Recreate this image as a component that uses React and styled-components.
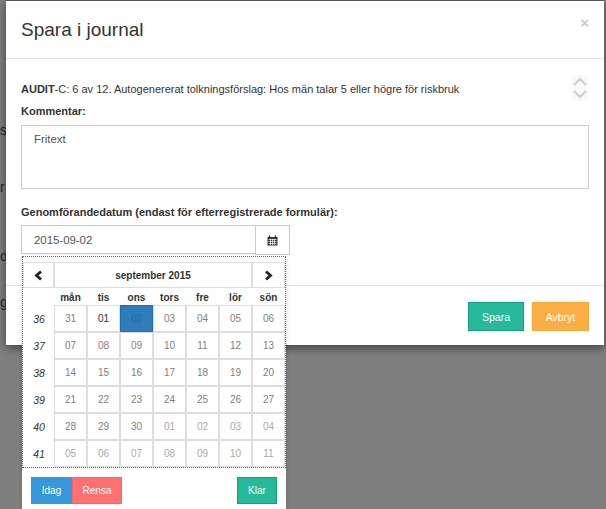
import React from "react";
import styled, { createGlobalStyle } from "styled-components";

const Global = createGlobalStyle`
  html, body { margin: 0; padding: 0; height: 100%; }
  body { background: #7f7f7f; font-family: "Liberation Sans", Arial, sans-serif; color: #333; overflow: hidden; }
`;
const Page = styled.div`
  position: relative; width: 606px; height: 509px; overflow: hidden; background: #7f7f7f;
  padding: 0 2px 0 6px; box-sizing: border-box;
`;
const Behind = styled.span`
  position: absolute; left: 0; top: ${p => p.$y}px; font-size: 14px; line-height: 16px; color: #262626;
`;
const Modal = styled.div`
  position: relative; background: #fff; height: 345px; display: flex; flex-direction: column;
  box-shadow: 0 3px 9px rgba(0,0,0,.5);
  border-top: 1px solid #555; box-sizing: border-box;
`;
const Header = styled.header`
  height: 58px; flex: none; box-sizing: border-box; border-bottom: 1px solid #e5e5e5; padding: 0 15px;
  display: flex; align-items: center; justify-content: space-between;
`;
const Title = styled.h4`
  margin: 1px 0 0; font-size: 19px; font-weight: 400; color: #333; line-height: 20px;
`;
const Close = styled.span`
  font-size: 15px; font-weight: 700; color: #c8c8c8; margin: 0 0 14px; line-height: 16px;
`;
const Body = styled.div`
  flex: 1; padding: 15px; display: flex; flex-direction: column;
`;
const InfoRow = styled.div`
  display: flex; justify-content: space-between; align-items: center; height: 32px; margin-top: -2px;
`;
const Info = styled.p`
  margin: 2px 0 0; font-size: 11px; line-height: 16px; color: #333;
  b { font-weight: 700; }
`;
const Scroller = styled.svg`
  width: 18px; height: 28px; background: #fafafa; flex: none;
`;
const Label = styled.label`
  display: block; font-size: 11px; font-weight: 700; line-height: 14px; color: #333;
`;
const Comment = styled.div`
  margin-top: 7px; height: 64px; border: 1px solid #ccc; box-sizing: border-box; padding: 6px 12px;
  font-size: 11.4px; line-height: 14px; color: #555;
`;
const DateLabel = styled(Label)`
  margin-top: 16px;
`;
const DateGroup = styled.div`
  display: flex; width: 269px; margin-top: 6px; height: 30px;
`;
const DateInput = styled.div`
  width: 234px; height: 29px; box-sizing: border-box; border: 1px solid #ccc; border-right: 0; padding: 0 12px;
  display: flex; align-items: center; font-size: 11.4px; color: #555;
`;
const CalButton = styled.div`
  flex: 1; border: 1px solid #ccc; display: flex; align-items: center; justify-content: center; box-sizing: border-box;
`;
const Footer = styled.footer`
  height: 60px; flex: none; box-sizing: border-box; border-top: 1px solid #e5e5e5;
  display: flex; justify-content: flex-end; gap: 8px; padding: 16px 15px 0 0;
`;
const Btn = styled.button`
  background: ${p => p.$bg}; border: 1px solid ${p => p.$line}; color: #fff; font: 400 10.5px "Liberation Sans", Arial, sans-serif;
  width: ${p => p.$w}px; height: 29px; padding: 0; border-radius: 0;
`;
const Picker = styled.div`
  position: absolute; left: 22px; top: 255px; width: 264px; height: 254px; background: #fff;
  box-shadow: 0 1px 4px rgba(0,0,0,.2); box-sizing: border-box; padding-top: 1px;
`;
const CalGrid = styled.div`
  border: 1px dotted #666; height: 212px; box-sizing: border-box; padding-top: 5px;
  display: grid; grid-template-columns: 31px repeat(7, 33px); grid-template-rows: 26px 17px repeat(6, 27px);
  font-size: 10px;
`;
const Nav = styled.div`
  display: flex; align-items: center; justify-content: center; background: #fff; border: 1px solid #ddd; box-sizing: border-box;
  ${p => p.$wide && "grid-column: span 6; font-weight: 700; color: #333;"}
`;
const Head = styled.div`
  display: flex; align-items: center; justify-content: center; font-weight: 700; color: #333; font-size: 10px; padding-top: 1px;
`;
const Week = styled.div`
  display: flex; align-items: center; justify-content: center; font-style: italic; color: #333; font-size: 10.5px; padding-left: 1px;
`;
const Cell = styled.div`
  display: flex; align-items: center; justify-content: center; box-sizing: border-box;
  border: 1px solid #ddd; font-size: 10px;
  color: ${p => p.$tone};
  background: ${p => (p.$sel ? "#2e7db8" : "#fff")};
  ${p => p.$sel && "border-color: #1f6fa8;"}
`;
const Actions = styled.div`
  display: flex; padding: 9px 9px 0 9px;
`;
const Small = styled.button`
  background: ${p => p.$bg}; border: 1px solid ${p => p.$line}; color: #fff; font: 400 10px "Liberation Sans", Arial, sans-serif;
  width: ${p => p.$w}px; height: 27px; padding: 0; border-radius: 0;
  ${p => p.$end && "margin-left: auto;"}
`;

const Chevron = ({ right }) => (
  <svg width="9" height="11" viewBox="0 0 9 11">
    <path d={right ? "M2 1.5 6.5 5.5 2 9.5" : "M7 1.5 2.5 5.5 7 9.5"} fill="none" stroke="#222" strokeWidth="2.8" />
  </svg>
);

const CalendarIcon = () => (
  <svg width="11" height="11" viewBox="0 0 11 11">
    <path d="M0.5 2h10v8.5h-10z" fill="#333" />
    <path d="M2.5 0.5v2M8.5 0.5v2" stroke="#333" strokeWidth="1.4" />
    <path d="M1.5 4.5h8M1.5 6.5h8M1.5 8.5h8M3.5 4v6M5.5 4v6M7.5 4v6" stroke="#fff" strokeWidth=".7" />
  </svg>
);

const weeks = [
  [36, ["31", "01", "02", "03", "04", "05", "06"]],
  [37, ["07", "08", "09", "10", "11", "12", "13"]],
  [38, ["14", "15", "16", "17", "18", "19", "20"]],
  [39, ["21", "22", "23", "24", "25", "26", "27"]],
  [40, ["28", "29", "30", "01", "02", "03", "04"]],
  [41, ["05", "06", "07", "08", "09", "10", "11"]],
];
const days = ["mån", "tis", "ons", "tors", "fre", "lör", "sön"];

const tone = (w, i) => {
  if (w === 36 && i === 1) return "#333";
  if (w === 36 && i === 2) return "#1f6fa8";
  if (w === 41 || (w === 40 && i > 2)) return "#aaa";
  return "#808080";
};

export default function App() {
  return (
    <Page>
      <Global />
      <Behind $y={122}>s</Behind>
      <Behind $y={179}>r</Behind>
      <Behind $y={248}>d</Behind>
      <Behind $y={294}>g</Behind>
      <Modal>
        <Header>
          <Title>Spara i journal</Title>
          <Close>×</Close>
        </Header>
        <Body>
          <InfoRow>
            <Info><b>AUDIT</b>-C: 6 av 12. Autogenererat tolkningsförslag: Hos män talar 5 eller högre för riskbruk</Info>
            <Scroller viewBox="0 0 18 28">
              <path d="M3 11 9 5l6 6M3 17l6 6 6-6" fill="none" stroke="#cfcfcf" strokeWidth="2.4" />
            </Scroller>
          </InfoRow>
          <Label>Kommentar:</Label>
          <Comment>Fritext</Comment>
          <DateLabel>Genomförandedatum (endast för efterregistrerade formulär):</DateLabel>
          <DateGroup>
            <DateInput>2015-09-02</DateInput>
            <CalButton><CalendarIcon /></CalButton>
          </DateGroup>
        </Body>
        <Footer>
          <Btn $bg="#26b99a" $line="#169f85" $w={56}>Spara</Btn>
          <Btn $bg="#fcae45" $line="#f4a63c" $w={57}>Avbryt</Btn>
        </Footer>
      </Modal>
      <Picker>
        <CalGrid>
          <Nav><Chevron /></Nav>
          <Nav $wide>september 2015</Nav>
          <Nav><Chevron right /></Nav>
          <span />
          {days.map(d => <Head key={d}>{d}</Head>)}
          {weeks.map(([w, ds]) => (
            <React.Fragment key={w}>
              <Week>{w}</Week>
              {ds.map((d, i) => (
                <Cell key={i} $tone={tone(w, i)} $sel={w === 36 && i === 2}>{d}</Cell>
              ))}
            </React.Fragment>
          ))}
        </CalGrid>
        <Actions>
          <Small $bg="#3498db" $line="#3498db" $w={41}>Idag</Small>
          <Small $bg="#ff7070" $line="#f2686e" $w={50}>Rensa</Small>
          <Small $bg="#26b99a" $line="#169f85" $w={40} $end>Klar</Small>
        </Actions>
      </Picker>
    </Page>
  );
}
